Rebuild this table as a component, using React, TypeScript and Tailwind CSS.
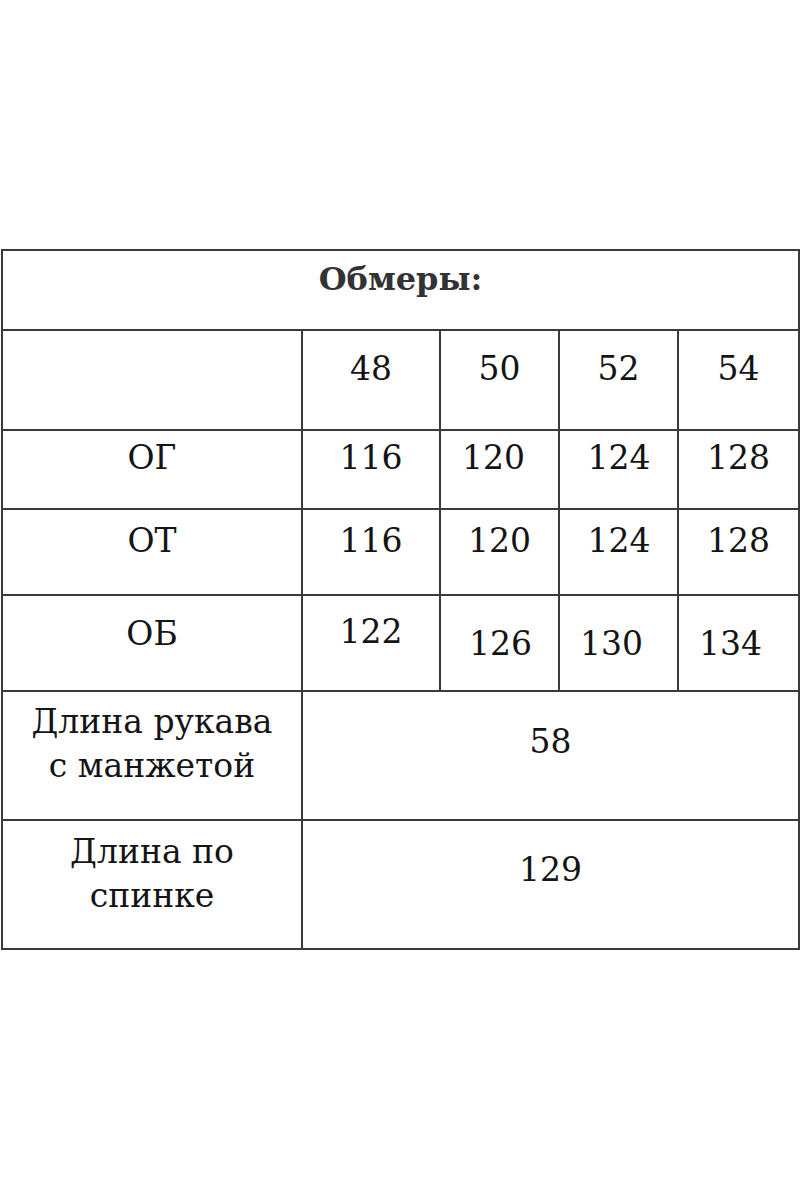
import React from "react";

const font = { fontFamily: '"DejaVu Serif", "Liberation Serif", serif' };

export default function App() {
  const b = "border-2 border-[#3a3a3a] align-top p-0";
  return (
    <div className="w-[800px] h-[1200px] bg-white pt-[249px] pl-[1px]" style={font}>
      <table className="table-fixed border-collapse w-[797px] text-[#141414] text-[33px] leading-[44px]">
        <colgroup>
          <col className="w-[300px]" />
          <col className="w-[138px]" />
          <col className="w-[119px]" />
          <col className="w-[119px]" />
          <col className="w-[121px]" />
        </colgroup>
        <tbody>
          <tr className="h-[80px]">
            <td colSpan={5} className={b}>
              <div className="pt-[6px] text-center font-bold text-[#333] text-[32px]">Обмеры:</div>
            </td>
          </tr>
          <tr className="h-[100px]">
            <td className={b}></td>
            <td className={b}><div className="pt-[16px] text-center">48</div></td>
            <td className={b}><div className="pt-[16px] text-center">50</div></td>
            <td className={b}><div className="pt-[16px] text-center">52</div></td>
            <td className={b}><div className="pt-[16px] text-center">54</div></td>
          </tr>
          <tr className="h-[79px]">
            <td className={b}><div className="pt-[5px] text-center">ОГ</div></td>
            <td className={b}><div className="pt-[5px] text-center">116</div></td>
            <td className={b}><div className="pt-[5px] text-center pr-[12px]">120</div></td>
            <td className={b}><div className="pt-[5px] text-center pl-[1px]">124</div></td>
            <td className={b}><div className="pt-[5px] text-center">128</div></td>
          </tr>
          <tr className="h-[86px]">
            <td className={b}><div className="pt-[9px] text-center">ОТ</div></td>
            <td className={b}><div className="pt-[9px] text-center">116</div></td>
            <td className={b}><div className="pt-[9px] text-center">120</div></td>
            <td className={b}><div className="pt-[9px] text-center pl-[1px]">124</div></td>
            <td className={b}><div className="pt-[9px] text-center">128</div></td>
          </tr>
          <tr className="h-[96px]">
            <td className={b}><div className="pt-[16px] text-center">ОБ</div></td>
            <td className={b}><div className="pt-[14px] text-center">122</div></td>
            <td className={b}><div className="pt-[26px] text-center pl-[2px]">126</div></td>
            <td className={b}><div className="pt-[26px] text-center pr-[14px]">130</div></td>
            <td className={b}><div className="pt-[26px] text-center pr-[16px]">134</div></td>
          </tr>
          <tr className="h-[129px]">
            <td className={b}>
              <div className="pt-[8px] text-center">Длина рукава<br />с манжетой</div>
            </td>
            <td colSpan={4} className={b}>
              <div className="pt-[28px] text-center">58</div>
            </td>
          </tr>
          <tr className="h-[129px]">
            <td className={b}>
              <div className="pt-[9px] text-center">Длина по<br />спинке</div>
            </td>
            <td colSpan={4} className={b}>
              <div className="pt-[27px] text-center">129</div>
            </td>
          </tr>
        </tbody>
      </table>
    </div>
  );
}
